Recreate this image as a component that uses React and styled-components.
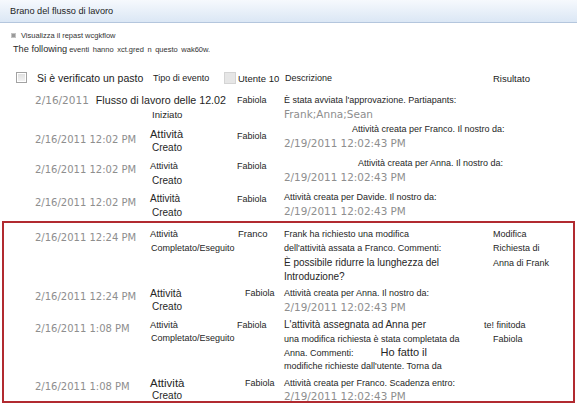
import React from 'react';
import styled, {createGlobalStyle} from 'styled-components';

const GlobalStyle = createGlobalStyle`
  body {
    margin: 0;
    background: #ffffff;
    font-family: "Liberation Sans", Arial, sans-serif;
    color: #262626;
  }
`
const COLS = '35px 115px 87px 47px 200px 1fr';
const BOX_COLS = '31px 115px 87px 47px 200px 1fr';

const Page = styled.div`
  width: 577px;
`
const TitleBar = styled.div`
  height: 22px;
  display: flex;
  align-items: center;
  padding-left: 10px;
  font-size: 9.2px;
  color: #1e1e1e;
  background: linear-gradient(#f6f9fd, #dbe7f5);
  border-bottom: 1px solid #b4c6dd;
`
const Intro = styled.div`
  padding: 5px 0 0 11px;
`
const LinkLine = styled.div`
  display: flex;
  align-items: center;
  gap: 5px;
  height: 14px;
  font-size: 7.5px;
  color: #333;
`
const Bullet = styled.span`
  width: 3px;
  height: 3px;
  background: #9a9a9a;
  border: 1px solid #c4c4c4;
`
const Following = styled.div`
  height: 14px;
  line-height: 14px;
  padding-left: 2px;
  font-size: 7.5px;
  word-spacing: 1.5px;
  color: #333;
  white-space: nowrap;
`
const Big = styled.span`
  font-size: 9.2px;
  word-spacing: 0;
  color: #2a2a2a;
  margin-right: 2px;
`
const Grid = styled.div`
  display: grid;
  grid-template-columns: ${props => props.$inset ? BOX_COLS : COLS};
  height: ${props => props.$h}px;
`
const HeaderGrid = styled(Grid)`
  margin-top: 13px;
  align-items: center;
  white-space: nowrap;
`
const Check = styled.span`
  display: inline-block;
  box-sizing: border-box;
  width: 11px;
  height: 11px;
  margin-left: 16px;
  border: 1px solid #a2a2a2;
  background: linear-gradient(#dedede, #f4f4f4);
  box-shadow: inset 0 0 0 1px #ffffff;
`
const DimCheck = styled(Check)`
  width: 12px;
  height: 12px;
  margin: 0 1px 0 auto;
  border-color: #d4d4d4;
  background: #e6e6e6;
  box-shadow: none;
`
const HeadText = styled.span`
  font-size: ${props => props.$size}px;
  padding-left: ${props => props.$pl || 0}px;
  color: #222;
`
const TypeHead = styled.div`
  display: flex;
  align-items: center;
`
const Rows = styled.div`
  margin-top: 10px;
`
const Cell = styled.div`
  grid-column: ${props => props.$span || 'auto'};
  padding-top: ${props => props.$pt || 0}px;
  padding-left: ${props => props.$pl || 0}px;
  white-space: nowrap;
  min-width: 0;
`
const Line = styled.div`
  display: flex;
  align-items: baseline;
  height: ${props => props.$h || 14}px;
  line-height: ${props => props.$h || 14}px;
  padding-left: ${props => props.$pl || 0}px;
  font-size: ${props => props.$size || 9}px;
  color: #262626;
`
const DateText = styled.span`
  font-family: "DejaVu Sans", Verdana, sans-serif;
  font-size: ${props => props.$size || 10}px;
  color: #8e8e8e;
  line-height: 14px;
`
const DateLine = styled(Line)`
  font-family: "DejaVu Sans", Verdana, sans-serif;
  font-size: ${props => props.$size || 10.4}px;
  color: #8e8e8e;
`
const Extra = styled.span`
  font-size: ${props => props.$size}px;
  margin-left: ${props => props.$ml}px;
`
const Title = styled.span`
  font-size: 10.7px;
  margin-left: 7px;
  color: #1e1e1e;
`
const Highlight = styled.div`
  margin: 0 2px;
  padding: 4px 0 1px;
  border: 2px solid #b12a30;
`

const dateLine = (h) => ({t: '2/19/2011 12:02:43 PM', date: true, h});

const rows = [
  {h: 34, date: '2/16/2011 12:02 PM', datePt: 7,
    typePt: 5, type: [{t: 'Attività', s: 11}, {t: 'Creato', s: 10, pl: 2}],
    user: 'Fabiola', userPt: 7,
    desc: [{t: 'Attività creata per Franco. Il nostro da:', pl: 68}, dateLine(15)]},
  {h: 34, date: '2/16/2011 12:02 PM', datePt: 3,
    typePt: 3, type: [{t: 'Attività', s: 9.3}, {t: 'Creato', s: 10, pl: 2, h: 15}],
    user: 'Fabiola', userPt: 3,
    desc: [{t: 'Attività creata per Anna. Il nostro da:', pl: 74}, dateLine()]},
  {h: 31, date: '2/16/2011 12:02 PM', datePt: 2,
    typePt: 2, type: [{t: 'Attività', s: 10}, {t: 'Creato', s: 10, pl: 2}],
    user: 'Fabiola', userPt: 2,
    desc: [{t: 'Attività creata per Davide. Il nostro da:'}, dateLine()]},
];

const boxed = [
  {h: 59, date: '2/16/2011 12:24 PM',
    type: [{t: 'Attività', s: 9.3}, {t: 'Completato/Eseguito', s: 9, pl: 1}],
    user: 'Franco', userSize: 9.5, userPl: 1,
    desc: [
      {t: 'Frank ha richiesto una modifica'},
      {t: "dell'attività assata a Franco. Commenti:", h: 15},
      {t: 'È possibile ridurre la lunghezza del', s: 10},
      {t: 'Introduzione?', s: 10},
    ],
    result: [{t: 'Modifica', pl: 9}, {t: 'Richiesta di', pl: 9, h: 15}, {t: 'Anna di Frank', pl: 9}]},
  {h: 32, date: '2/16/2011 12:24 PM',
    type: [{t: 'Attività', s: 10.5}, {t: 'Creato', s: 10, pl: 2, h: 13}],
    user: 'Fabiola', userPl: 8,
    desc: [{t: 'Attività creata per Anna. Il nostro da:'}, dateLine()]},
  {h: 58, date: '2/16/2011 1:08 PM',
    type: [{t: 'Attività', s: 9.3}, {t: 'Completato/Eseguito', s: 9, pl: 1, h: 13}],
    user: 'Fabiola',
    desc: [
      {t: "L'attività assegnata ad Anna per", s: 10},
      {t: 'una modifica richiesta è stata completata da'},
      {t: 'Anna. Commenti:', extra: 'Ho fatto il', extraSize: 11, extraMl: 27, h: 13},
      {t: "modifiche richieste dall'utente. Torna da"},
    ],
    result: [{t: 'te! finitoda'}, {t: 'Fabiola', pl: 9}]},
  {h: 24, date: '2/16/2011 1:08 PM',
    type: [{t: 'Attività', s: 11.5}, {t: 'Creato', s: 10, pl: 2, h: 12}],
    user: 'Fabiola', userPl: 8,
    desc: [{t: 'Attività creata per Franco. Scadenza entro:'}, dateLine(12)]},
];

const renderLines = lines => lines.map((l, i) => l.date
  ? <DateLine key={i} $h={l.h}>{l.t}</DateLine>
  : (
    <Line key={i} $size={l.s} $pl={l.pl} $h={l.h}>
      {l.t}
      {l.extra && <Extra $size={l.extraSize} $ml={l.extraMl}>{l.extra}</Extra>}
    </Line>
  ));

function EventRow({row, inset}){
  return (
    <Grid $h={row.h} $inset={inset}>
      <Cell />
      <Cell $pt={row.datePt}><DateText>{row.date}</DateText></Cell>
      <Cell $pt={row.typePt}>{renderLines(row.type)}</Cell>
      <Cell $pt={row.userPt} $pl={row.userPl}>
        <Line $size={row.userSize}>{row.user}</Line>
      </Cell>
      <Cell>{renderLines(row.desc)}</Cell>
      <Cell>{row.result && renderLines(row.result)}</Cell>
    </Grid>
  );
}

export default function App(){
  return (
    <Page>
      <GlobalStyle />
      <TitleBar>Brano del flusso di lavoro</TitleBar>
      <Intro>
        <LinkLine><Bullet />Visualizza il repast wcgkflow</LinkLine>
        <Following><Big>The following</Big>eventi hanno xct.gred n questo wak60w.</Following>
      </Intro>
      <HeaderGrid $h={14}>
        <Cell><Check /></Cell>
        <HeadText $size={10.5} $pl={2}>Si è verificato un pasto</HeadText>
        <TypeHead>
          <HeadText $size={9} $pl={3}>Tipo di evento</HeadText>
          <DimCheck />
        </TypeHead>
        <HeadText $size={9.5} $pl={1}>Utente 10</HeadText>
        <HeadText $size={9} $pl={1}>Descrizione</HeadText>
        <HeadText $size={9.5} $pl={9}>Risultato</HeadText>
      </HeaderGrid>
      <Rows>
        <Grid $h={29}>
          <Cell />
          <Cell $span="span 2">
            <Line><DateText $size={10.5}>2/16/2011</DateText><Title>Flusso di lavoro delle 12.02</Title></Line>
            <Line $size={9.6} $pl={117} $h={15}>Iniziato</Line>
          </Cell>
          <Cell><Line>Fabiola</Line></Cell>
          <Cell>
            <Line>È stata avviata l'approvazione. Partiapants:</Line>
            <DateLine $size={10.5}>Frank;Anna;Sean</DateLine>
          </Cell>
          <Cell />
        </Grid>
        {rows.map((row, i) => <EventRow key={i} row={row} />)}
        <Highlight>
          {boxed.map((row, i) => <EventRow key={i} row={row} inset />)}
        </Highlight>
      </Rows>
    </Page>
  );
}
